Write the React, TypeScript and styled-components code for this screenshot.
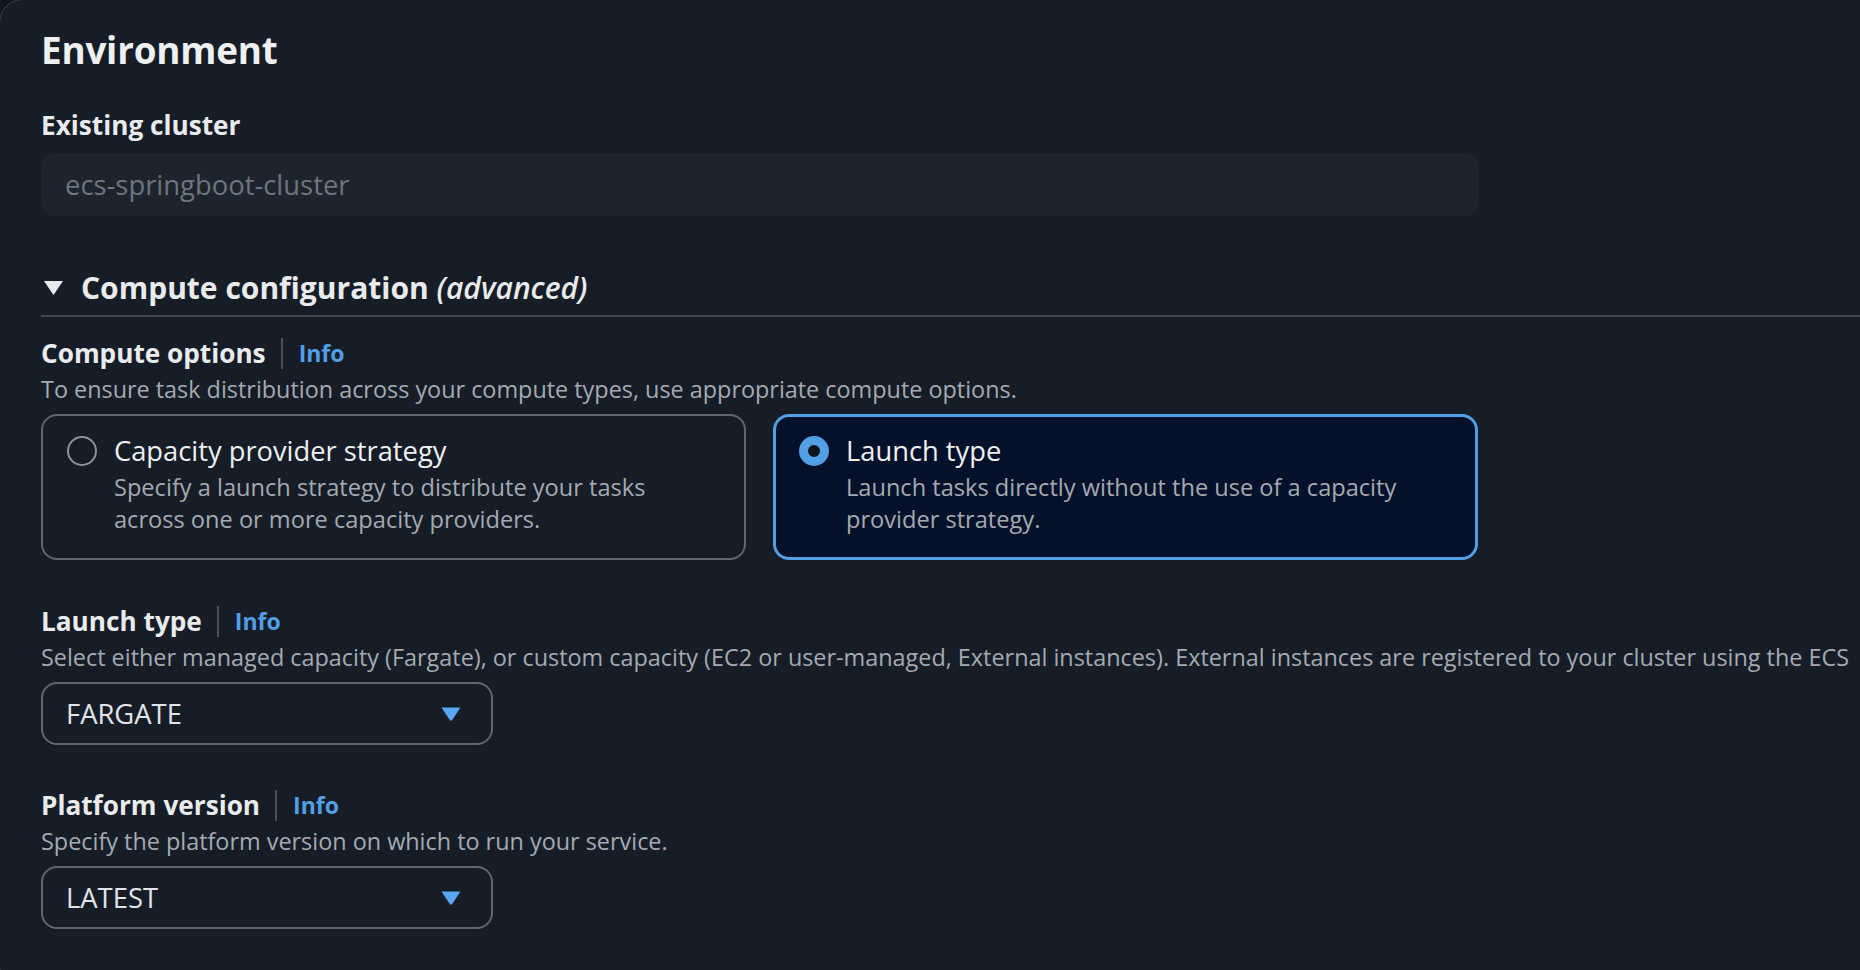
import React from "react";
import styled, { createGlobalStyle } from "styled-components";

const Global = createGlobalStyle`
  html, body { margin: 0; padding: 0; background: #12171e; overflow: hidden; }
  body { font-family: "Open Sans", "Noto Sans", sans-serif; color: #e9ebed; }
  * { box-sizing: border-box; }
`;

const Panel = styled.section`
  margin: -1px 0 0 -1px;
  width: 1900px;
  min-height: 990px;
  background: #161d26;
  border: 1px solid #3b414a;
  border-radius: 24px;
  padding: 28px 0 0 41px;
  overflow: hidden;
`;

const Heading = styled.h2`
  margin: 0;
  font-size: 36.8px;
  line-height: 44px;
  font-weight: 700;
  color: #eef0f2;
  letter-spacing: -0.2px;
`;

const Field = styled.div<{ $mt: number }>`
  margin-top: ${(p) => p.$mt}px;
  display: flex;
  flex-direction: column;
`;

const LabelRow = styled.div`
  display: flex;
  align-items: center;
  height: 32px;
`;

const Label = styled.span`
  font-size: 26.2px;
  line-height: 32px;
  font-weight: 700;
  color: #e9ebed;
`;

const Divider = styled.span`
  width: 2px;
  height: 31px;
  background: #4a5059;
  margin: 0 16px 0 15px;
`;

const InfoLink = styled.a`
  font-size: 23px;
  line-height: 32px;
  font-weight: 700;
  color: #539fe5;
  text-decoration: none;
`;

const Desc = styled.p`
  margin: 4px 0 0;
  font-size: 23.4px;
  line-height: 32px;
  color: #a5aab2;
  white-space: nowrap;
`;

const DisabledInput = styled.div`
  margin-top: 12px;
  width: 1438px;
  height: 63px;
  border-radius: 14px;
  background: #1e242d;
  display: flex;
  align-items: center;
  padding: 0 24px;
  font-size: 27.4px;
  color: #6f757e;
`;

const ExpandHeader = styled.div`
  margin-top: 52px;
  display: flex;
  align-items: center;
  height: 40px;
`;

const Caret = styled.svg`
  width: 19px;
  height: 14px;
  margin: 0 18px 0 3px;
  fill: #e9ebed;
`;

const ExpandTitle = styled.span`
  font-size: 30px;
  line-height: 40px;
  font-weight: 700;
  color: #e9ebed;
  em {
    font-weight: 600;
    font-style: italic;
  }
`;

const Rule = styled.div`
  margin-top: 7px;
  height: 2px;
  background: #414750;
`;

const Cards = styled.div`
  margin-top: 9px;
  display: grid;
  grid-template-columns: 705px 705px;
  gap: 27px;
`;

const Card = styled.div<{ $selected?: boolean }>`
  height: 146px;
  border-radius: 16px;
  border: ${(p) => (p.$selected ? "3px solid #539fe5" : "2px solid #5f6670")};
  background: ${(p) => (p.$selected ? "#04112a" : "transparent")};
  padding: ${(p) => (p.$selected ? "18px 16px 0 23px" : "19px 16px 0 24px")};
  display: flex;
  gap: 17px;
`;

const Radio = styled.span<{ $checked?: boolean }>`
  flex: none;
  width: 30px;
  height: 30px;
  margin-top: 1px;
  border-radius: 50%;
  border: ${(p) => (p.$checked ? "9px solid #539fe5" : "2px solid #8d939c")};
  background: ${(p) => (p.$checked ? "#0f141a" : "transparent")};
`;

const CardText = styled.div`
  display: flex;
  flex-direction: column;
`;

const CardTitle = styled.span`
  font-size: 27.3px;
  line-height: 32px;
  font-weight: 500;
  color: #eef0f2;
`;

const CardDesc = styled.span`
  margin-top: 4px;
  font-size: 23.6px;
  line-height: 32px;
  color: #a5aab2;
  white-space: nowrap;
`;

const Select = styled.div`
  margin-top: 9px;
  width: 452px;
  height: 63px;
  border: 2px solid #5f6670;
  border-radius: 16px;
  display: flex;
  align-items: center;
  justify-content: space-between;
  padding: 0 30px 0 23px;
  font-size: 27.4px;
  color: #e2e4e7;
`;

const Arrow = styled.svg`
  width: 20px;
  height: 14px;
  fill: #5aa8f4;
`;

function InfoLabel({ text }: { text: string }) {
  return (
    <LabelRow>
      <Label>{text}</Label>
      <Divider />
      <InfoLink href="#">Info</InfoLink>
    </LabelRow>
  );
}

function SelectBox({ value }: { value: string }) {
  return (
    <Select>
      <span>{value}</span>
      <Arrow viewBox="0 0 20 14">
        <path d="M0.5 0.5 H19.5 L11.2 13 Q10 14.3 8.8 13 Z" />
      </Arrow>
    </Select>
  );
}

export default function App() {
  return (
    <>
      <Global />
      <Panel>
        <Heading>Environment</Heading>

        <Field $mt={37}>
          <LabelRow>
            <Label>Existing cluster</Label>
          </LabelRow>
          <DisabledInput>ecs-springboot-cluster</DisabledInput>
        </Field>

        <ExpandHeader>
          <Caret viewBox="0 0 19 14">
            <path d="M0 0 H19 L9.5 14 Z" />
          </Caret>
          <ExpandTitle>
            Compute configuration <em>(advanced)</em>
          </ExpandTitle>
        </ExpandHeader>
        <Rule />

        <Field $mt={20}>
          <InfoLabel text="Compute options" />
          <Desc>To ensure task distribution across your compute types, use appropriate compute options.</Desc>
          <Cards>
            <Card>
              <Radio />
              <CardText>
                <CardTitle>Capacity provider strategy</CardTitle>
                <CardDesc>
                  Specify a launch strategy to distribute your tasks
                  <br />
                  across one or more capacity providers.
                </CardDesc>
              </CardText>
            </Card>
            <Card $selected>
              <Radio $checked />
              <CardText>
                <CardTitle>Launch type</CardTitle>
                <CardDesc>
                  Launch tasks directly without the use of a capacity
                  <br />
                  provider strategy.
                </CardDesc>
              </CardText>
            </Card>
          </Cards>
        </Field>

        <Field $mt={45}>
          <InfoLabel text="Launch type" />
          <Desc>
            Select either managed capacity (Fargate), or custom capacity (EC2 or user-managed, External instances). External instances are registered to your cluster using the ECS
          </Desc>
          <SelectBox value="FARGATE" />
        </Field>

        <Field $mt={44}>
          <InfoLabel text="Platform version" />
          <Desc>Specify the platform version on which to run your service.</Desc>
          <SelectBox value="LATEST" />
        </Field>
      </Panel>
    </>
  );
}
